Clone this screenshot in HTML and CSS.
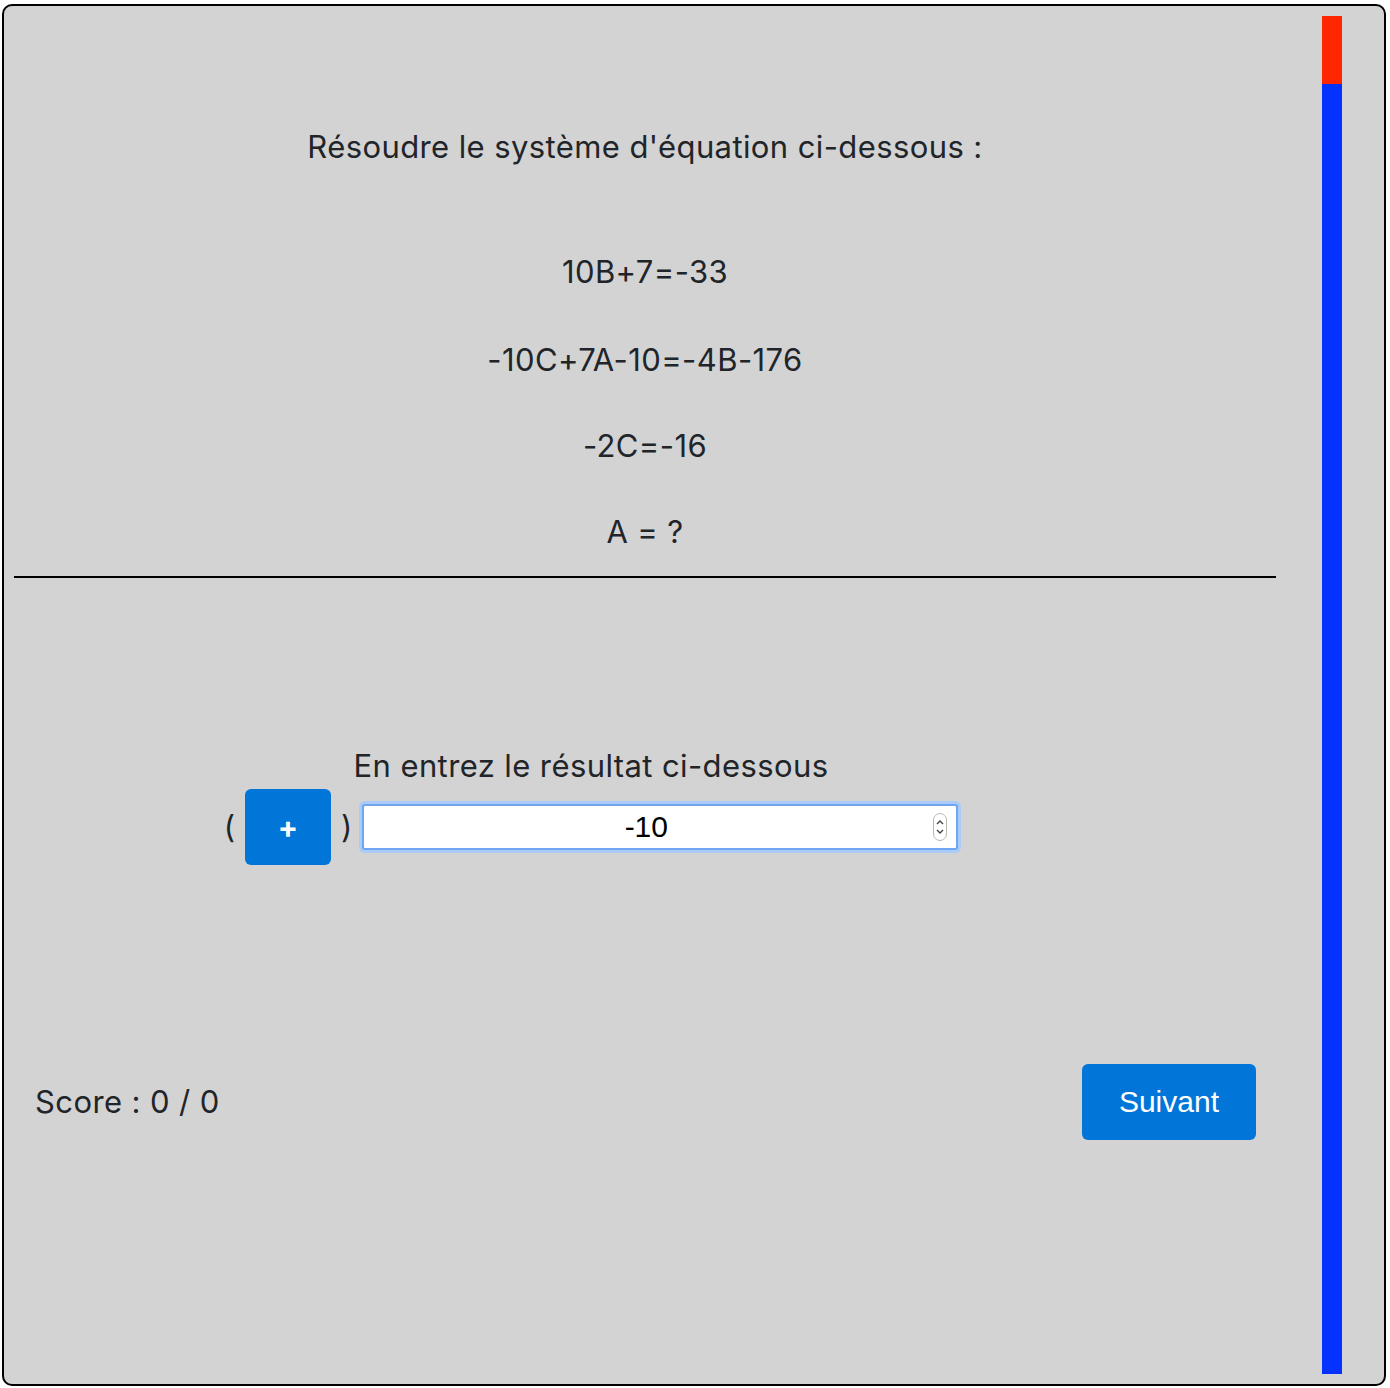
FILE: index.html
```html
<!DOCTYPE html>
<html lang="fr">
<head>
    <meta charset="utf-8">
    <title>Système d'équation</title>
    <link rel="stylesheet" href="styles.css">
</head>
<body>
    <div class="frame">
        <div class="content">
            <div class="question">
                <p class="title">Résoudre le système d'équation ci-dessous :</p>
                <p class="equation first">10B+7=-33</p>
                <p class="equation second">-10C+7A-10=-4B-176</p>
                <p class="equation">-2C=-16</p>
                <p class="equation">A = ?</p>
            </div>
            <hr class="separator">
            <div class="answer">
                <p class="label">En entrez le résultat ci-dessous</p>
                <div class="answer-row">
                    <span class="paren">(</span>
                    <button class="sign-button">+</button>
                    <span class="paren">)</span>
                    <div class="input-wrap">
                        <input class="answer-input" type="text" value="-10">
                        <span class="spinner">
                            <svg width="14" height="28" viewBox="0 0 14 28">
                                <rect x="0.5" y="0.5" width="13" height="27" rx="6.5" fill="#fff" stroke="#b8b8b8"/>
                                <path d="M4 11 L7 8 L10 11" fill="none" stroke="#444" stroke-width="1.4"/>
                                <path d="M4 17 L7 20 L10 17" fill="none" stroke="#444" stroke-width="1.4"/>
                            </svg>
                        </span>
                    </div>
                </div>
            </div>
            <div class="footer-row">
                <span class="score">Score : 0 / 0</span>
                <button class="next-button">Suivant</button>
            </div>
        </div>
        <div class="timer-bar">
            <div class="timer-used"></div>
            <div class="timer-left"></div>
        </div>
    </div>
</body>
</html>
```

FILE: styles.css
```css
body {
    margin: 0;
    padding: 4px 4px 2px 2px;
    background-color: #fff;
    font-family: Inter, "Liberation Sans", Arial, sans-serif;
    color: #212529;
}

.frame {
    box-sizing: border-box;
    height: 1382px;
    display: flex;
    padding: 10px 42px 10px 10px;
    border: 2px solid #000;
    border-radius: 10px;
    background-color: #d3d3d3;
}

.content {
    flex: 0 0 1262px;
    margin-right: 46px;
}

p {
    margin: 0;
    font-size: 31px;
    line-height: 36px;
    letter-spacing: 0.4px;
    text-align: center;
}

.title {
    margin-top: 113px;
}

.equation {
    margin-top: 50px;
}

.equation.first {
    margin-top: 89px;
}

.equation.second {
    margin-top: 52px;
}

.separator {
    margin: 26px 0 0 0;
    border: none;
    border-top: 2px solid #000;
}

.answer {
    display: flex;
    flex-direction: column;
    align-items: center;
    padding-right: 108px;
    margin-top: 170px;
}

.answer-row {
    display: flex;
    align-items: center;
    margin-top: 5px;
}

.paren {
    font-size: 31px;
    line-height: 36px;
}

.sign-button {
    width: 86px;
    height: 76px;
    margin: 0 10px;
    border: none;
    border-radius: 6px;
    background-color: #0275d8;
    color: #fff;
    font-family: Inter, "Liberation Sans", Arial, sans-serif;
    font-size: 30px;
    font-weight: bold;
    cursor: pointer;
}

.input-wrap {
    position: relative;
    margin-left: 10px;
}

.answer-input {
    box-sizing: border-box;
    width: 596px;
    height: 46px;
    padding: 0 28px 0 0;
    border: 2px solid #6fa5f2;
    border-radius: 3px;
    box-shadow: 0 0 0 3px #a9cbf7;
    outline: none;
    background-color: #fff;
    color: #000;
    font-family: "Liberation Sans", Arial, sans-serif;
    font-size: 30px;
    text-align: center;
}

.spinner {
    position: absolute;
    top: 9px;
    right: 11px;
    line-height: 0;
}

.footer-row {
    display: flex;
    justify-content: space-between;
    align-items: center;
    margin-top: 199px;
    padding: 0 20px 0 21px;
}

.score {
    font-size: 31px;
    line-height: 36px;
    letter-spacing: 0.4px;
}

.next-button {
    height: 76px;
    padding: 0 37px;
    border: none;
    border-radius: 6px;
    background-color: #0275d8;
    color: #fff;
    font-family: "Liberation Sans", Arial, sans-serif;
    font-size: 30px;
    cursor: pointer;
}

.timer-bar {
    display: flex;
    flex-direction: column;
    width: 20px;
}

.timer-used {
    height: 68px;
    background-color: #ff2600;
}

.timer-left {
    flex: 1;
    background-color: #0433ff;
}
```
